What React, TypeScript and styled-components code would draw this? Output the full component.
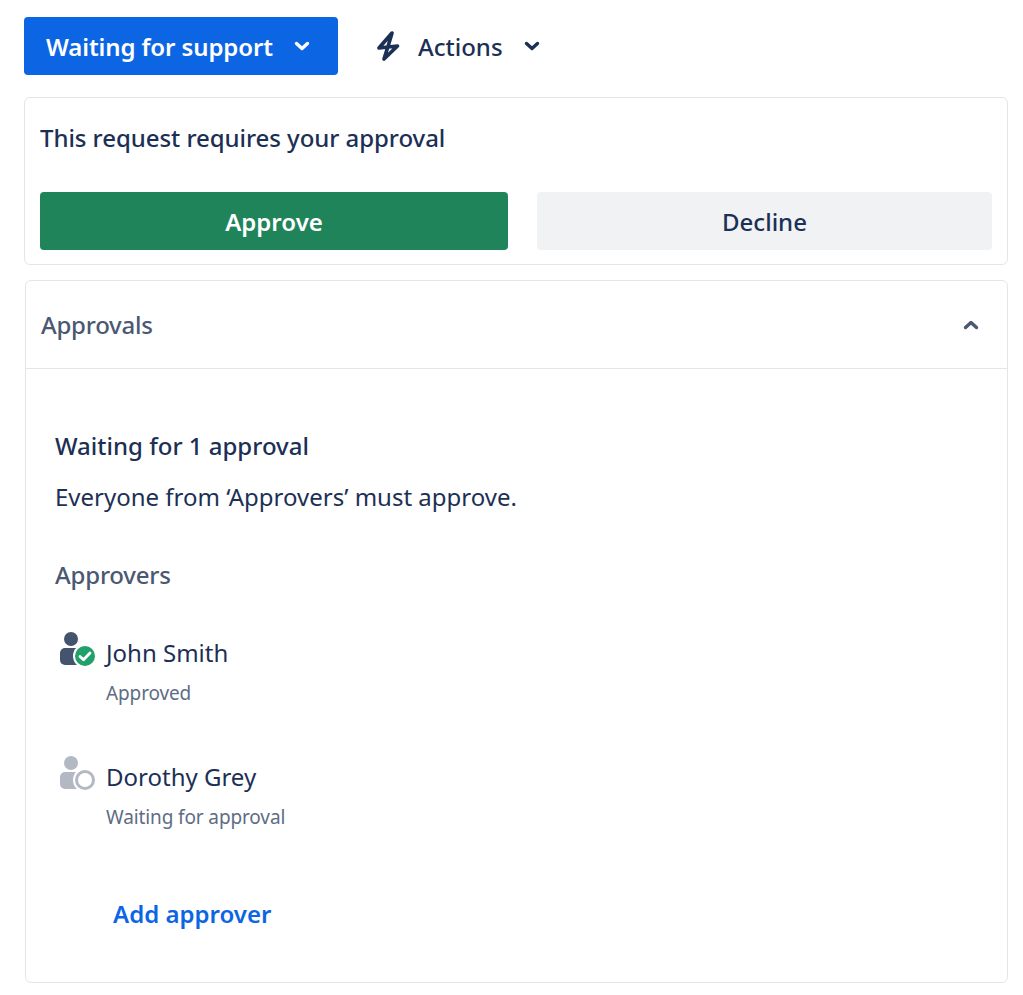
import React, {FC} from 'react';
import styled, {createGlobalStyle} from 'styled-components';

const GlobalStyle = createGlobalStyle`
  html, body {
    margin: 0;
    background: #fff;
  }
  body {
    font-family: "Noto Sans", "Open Sans", sans-serif;
    color: #1c3055;
  }
`;

const Page = styled.div`
  width: 984px;
  padding: 17px 15px 12px 24px;
`;

const Toolbar = styled.div`
  display: flex;
  align-items: center;
  height: 58px;
  margin-bottom: 22px;
`;

const StatusButton = styled.button`
  display: flex;
  align-items: center;
  height: 58px;
  width: 314px;
  padding: 0 0 0 22px;
  border: 0;
  border-radius: 4px;
  background: #0c66e4;
  color: #fff;
  font: 600 24px "Noto Sans", sans-serif;
  letter-spacing: -0.1px;
`;

const StatusChevron = styled.span`
  display: flex;
  margin-left: 21px;
`;

const ActionsButton = styled.button`
  display: flex;
  align-items: center;
  margin-left: 38px;
  padding: 0;
  border: 0;
  background: none;
  color: #1c3055;
  font: 500 24px "Noto Sans", sans-serif;
`;

const ActionsLabel = styled.span`
  margin: 0 21px 0 18px;
`;

const Card = styled.section`
  box-sizing: border-box;
  border: 1px solid #e4e5e9;
  border-radius: 6px;
  background: #fff;
`;

const ApprovalCard = styled(Card)`
  height: 168px;
  padding: 23px 15px 15px;
  margin-bottom: 15px;
`;

const ApprovalTitle = styled.div`
  font-size: 24px;
  font-weight: 500;
  line-height: 34px;
  letter-spacing: -0.06px;
  color: #1c3055;
`;

const DecisionRow = styled.div`
  display: grid;
  grid-template-columns: 468px 455px;
  justify-content: space-between;
  margin-top: 37px;
`;

const DecisionButton = styled.button<{$approve?: boolean}>`
  height: 58px;
  border: 0;
  border-radius: 4px;
  background: ${p => (p.$approve ? '#1f845a' : '#f1f2f4')};
  color: ${p => (p.$approve ? '#fff' : '#1c3055')};
  font: ${p => (p.$approve ? 600 : 500)} 24px "Noto Sans", sans-serif;
`;

const ApprovalsPanel = styled(Card)`
  height: 703px;
  margin-left: 1px;
`;

const PanelHeader = styled.header`
  display: flex;
  align-items: center;
  justify-content: space-between;
  height: 87px;
  padding: 0 28px 0 15px;
  border-bottom: 1px solid #e4e5e9;
`;

const PanelTitle = styled.h2`
  margin: 0;
  font-size: 24px;
  font-weight: 500;
  letter-spacing: -0.25px;
  color: #4a5872;
`;

const PanelBody = styled.div`
  padding: 60px 29px 0;
`;

const SummaryTitle = styled.h3`
  margin: 0;
  font-size: 24px;
  font-weight: 500;
  line-height: 34px;
  color: #1c3055;
`;

const SummaryText = styled.p`
  margin: 17px 0 0;
  font-size: 24px;
  line-height: 34px;
  color: #1c3055;
`;

const SectionLabel = styled.h4`
  margin: 44px 0 0;
  font-size: 24px;
  font-weight: 500;
  line-height: 34px;
  letter-spacing: -0.2px;
  color: #4a5872;
`;

const ApproverList = styled.div`
  display: flex;
  flex-direction: column;
  gap: 53px;
  margin-top: 44px;
`;

const ApproverRow = styled.div`
  display: flex;
  align-items: flex-start;
`;

const AvatarSlot = styled.div`
  width: 47px;
  flex: none;
  padding-left: 4px;
  margin-top: -5px;
  height: 0;
`;

const ApproverName = styled.div`
  font-size: 24px;
  line-height: 34px;
  color: #1c3055;
`;

const ApproverStatus = styled.div`
  margin-top: 9px;
  font-size: 19px;
  line-height: 28px;
  letter-spacing: -0.12px;
  color: #5e6c84;
`;

const AddApprover = styled.a`
  display: block;
  margin: 66px 0 0 58px;
  font-size: 24px;
  font-weight: 600;
  line-height: 34px;
  color: #0c66e4;
`;

const Chevron: FC<{color: string; up?: boolean}> = ({color, up}) => (
  <svg width="16" height="12" viewBox="0 0 16 12" fill="none">
    <path
      d={up ? 'M2.5 8.5 8 3.5l5.5 5' : 'M2.5 3.5 8 8.5l5.5-5'}
      stroke={color}
      strokeWidth="3.4"
      strokeLinecap="round"
      strokeLinejoin="round"
    />
  </svg>
);

const BoltIcon = () => (
  <svg width="24" height="32" viewBox="0 0 24 32" fill="none">
    <path
      d="M16 3 3 18l18.5-2L8 29l4-12.5L16 3Z"
      stroke="#1c3055"
      strokeWidth="3.7"
      strokeLinecap="round"
      strokeLinejoin="round"
    />
  </svg>
);

const ApproverIcon: FC<{approved?: boolean}> = ({approved}) => {
  const body = approved ? '#44546f' : '#b3b9c4';
  return (
    <svg width="37" height="37" viewBox="0 0 37 37">
      <circle cx="12" cy="8" r="7" fill={body} />
      <rect x="1" y="17" width="22" height="17" rx="5" fill={body} />
      <circle cx="26" cy="25" r="12" fill="#fff" />
      {approved ? (
        <>
          <circle cx="26" cy="25" r="10" fill="#22a06b" />
          <path
            d="m21 25.5 3.5 3.3 6.5-6.8"
            fill="none"
            stroke="#fff"
            strokeWidth="2.8"
            strokeLinecap="round"
            strokeLinejoin="round"
          />
        </>
      ) : (
        <circle cx="26" cy="25" r="8.5" fill="#fff" stroke={body} strokeWidth="3" />
      )}
    </svg>
  );
};

const approvers = [
  {name: 'John Smith', status: 'Approved', approved: true},
  {name: 'Dorothy Grey', status: 'Waiting for approval', approved: false},
];

const App: FC = () => (
  <Page>
    <GlobalStyle />
    <Toolbar>
      <StatusButton>
        Waiting for support
        <StatusChevron><Chevron color="#fff" /></StatusChevron>
      </StatusButton>
      <ActionsButton>
        <BoltIcon />
        <ActionsLabel>Actions</ActionsLabel>
        <Chevron color="#1c3055" />
      </ActionsButton>
    </Toolbar>
    <ApprovalCard>
      <ApprovalTitle>This request requires your approval</ApprovalTitle>
      <DecisionRow>
        <DecisionButton $approve>Approve</DecisionButton>
        <DecisionButton>Decline</DecisionButton>
      </DecisionRow>
    </ApprovalCard>
    <ApprovalsPanel>
      <PanelHeader>
        <PanelTitle>Approvals</PanelTitle>
        <Chevron color="#4a5872" up />
      </PanelHeader>
      <PanelBody>
        <SummaryTitle>Waiting for 1 approval</SummaryTitle>
        <SummaryText>Everyone from ‘Approvers’ must approve.</SummaryText>
        <SectionLabel>Approvers</SectionLabel>
        <ApproverList>
          {approvers.map(a => (
            <ApproverRow key={a.name}>
              <AvatarSlot><ApproverIcon approved={a.approved} /></AvatarSlot>
              <div>
                <ApproverName>{a.name}</ApproverName>
                <ApproverStatus>{a.status}</ApproverStatus>
              </div>
            </ApproverRow>
          ))}
        </ApproverList>
        <AddApprover>Add approver</AddApprover>
      </PanelBody>
    </ApprovalsPanel>
  </Page>
);

export default App;
